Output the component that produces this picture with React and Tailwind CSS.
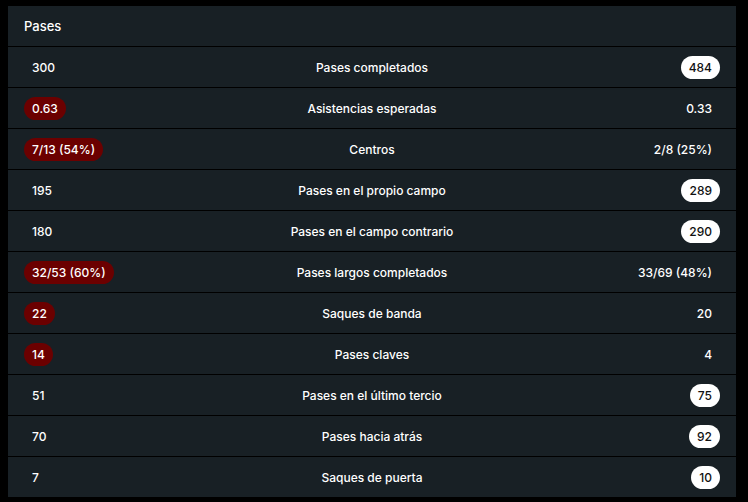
import React from 'react';

const rows = [
  { home: '300', label: 'Pases completados', away: '484', win: 'away' },
  { home: '0.63', label: 'Asistencias esperadas', away: '0.33', win: 'home' },
  { home: '7/13 (54%)', label: 'Centros', away: '2/8 (25%)', win: 'home' },
  { home: '195', label: 'Pases en el propio campo', away: '289', win: 'away' },
  { home: '180', label: 'Pases en el campo contrario', away: '290', win: 'away' },
  { home: '32/53 (60%)', label: 'Pases largos completados', away: '33/69 (48%)', win: 'home' },
  { home: '22', label: 'Saques de banda', away: '20', win: 'home' },
  { home: '14', label: 'Pases claves', away: '4', win: 'home' },
  { home: '51', label: 'Pases en el último tercio', away: '75', win: 'away' },
  { home: '70', label: 'Pases hacia atrás', away: '92', win: 'away' },
  { home: '7', label: 'Saques de puerta', away: '10', win: 'away' },
];

const Value = ({ text, highlight, side }) => {
  if (highlight && side === 'home') {
    return <span className="inline-block rounded-full bg-[#6b0000] px-2 py-[3px] text-white">{text}</span>;
  }
  if (highlight && side === 'away') {
    return <span className="inline-block rounded-full bg-white px-2 py-[3px] text-[#111]">{text}</span>;
  }
  return <span className="inline-block px-2 text-white">{text}</span>;
};

export default function App() {
  return (
    <div className="h-[502px] w-[748px] bg-black pl-2 pt-[6px]" style={{ fontFamily: 'Inter, "Noto Sans", sans-serif' }}>
      <div className="w-[728px] bg-[#182025] text-[12px] font-medium leading-[17px] text-white">
        <div className="flex h-[41px] items-center border-b border-black px-4 pt-px text-[13px]">Pases</div>
        {rows.map((r) => (
          <div key={r.label} className="grid h-[41px] grid-cols-[1fr_auto_1fr] items-center border-b border-black px-4 pt-px last:h-10 last:border-b-0">
            <div className="flex justify-start">
              <Value text={r.home} highlight={r.win === 'home'} side="home" />
            </div>
            <div className="text-center">{r.label}</div>
            <div className="flex justify-end">
              <Value text={r.away} highlight={r.win === 'away'} side="away" />
            </div>
          </div>
        ))}
      </div>
    </div>
  );
}
